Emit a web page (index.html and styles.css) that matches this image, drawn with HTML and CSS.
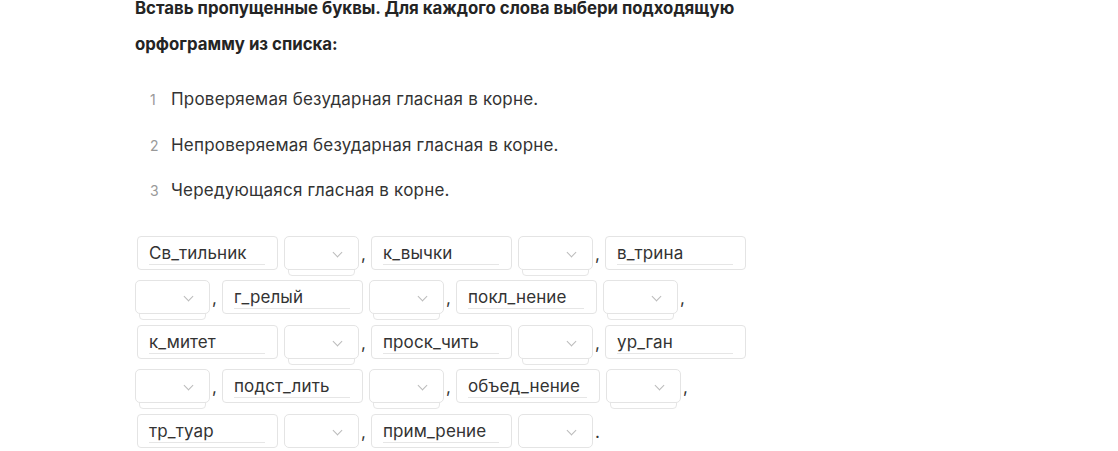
FILE: index.html
```html
<!DOCTYPE html>
<html lang="ru">
<head>
    <meta charset="UTF-8">
    <title>Орфограммы в корне</title>
    <link rel="stylesheet" href="styles.css">
</head>
<body>
    <main class="task">
        <h2 class="task-title">Вставь пропущенные буквы. Для каждого слова выбери подходящую орфограмму из списка:</h2>

        <ol class="rules">
            <li><span class="num">1</span>Проверяемая безударная гласная в корне.</li>
            <li><span class="num">2</span>Непроверяемая безударная гласная в корне.</li>
            <li><span class="num">3</span>Чередующаяся гласная в корне.</li>
        </ol>

        <div class="answers">
            <span class="word"><span class="field">Св_тильник</span></span>
            <span class="pick"><span class="select"></span><span class="punct">,</span></span>
            <span class="word"><span class="field">к_вычки</span></span>
            <span class="pick"><span class="select"></span><span class="punct">,</span></span>
            <span class="word"><span class="field">в_трина</span></span>
            <span class="pick"><span class="select"></span><span class="punct">,</span></span>

            <span class="word"><span class="field">г_релый</span></span>
            <span class="pick"><span class="select"></span><span class="punct">,</span></span>
            <span class="word"><span class="field">покл_нение</span></span>
            <span class="pick"><span class="select"></span><span class="punct">,</span></span>

            <span class="word"><span class="field">к_митет</span></span>
            <span class="pick"><span class="select"></span><span class="punct">,</span></span>
            <span class="word"><span class="field">проск_чить</span></span>
            <span class="pick"><span class="select"></span><span class="punct">,</span></span>
            <span class="word"><span class="field">ур_ган</span></span>
            <span class="pick"><span class="select"></span><span class="punct">,</span></span>

            <span class="word"><span class="field">подст_лить</span></span>
            <span class="pick"><span class="select"></span><span class="punct">,</span></span>
            <span class="word word-wide"><span class="field">объед_нение</span></span>
            <span class="pick"><span class="select"></span><span class="punct">,</span></span>

            <span class="word"><span class="field">тр_туар</span></span>
            <span class="pick"><span class="select"></span><span class="punct">,</span></span>
            <span class="word"><span class="field">прим_рение</span></span>
            <span class="pick"><span class="select"></span><span class="punct">.</span></span>
        </div>
    </main>
</body>
</html>
```

FILE: styles.css
```css
html {
    background-color: #fff;
}

body {
    margin: 0;
    padding: 0;
    font-family: Inter, "Noto Sans", sans-serif;
    color: #333;
}

.task {
    padding-left: 135px;
    width: 620px;
}

.task-title {
    margin: -10px 0 0;
    font-size: 16.8px;
    font-weight: 700;
    line-height: 36px;
    color: #242424;
    width: 615px;
}

.rules {
    list-style: none;
    margin: 15px 0 0;
    padding: 0 0 0 15px;
}

.rules li {
    font-size: 17px;
    letter-spacing: 0.2px;
    line-height: 24px;
    padding: 10px 0 10.5px;
    color: #333;
}

.rules .num {
    display: inline-block;
    width: 21px;
    font-size: 14px;
    letter-spacing: 0;
    color: #999;
}

.answers {
    display: flex;
    flex-wrap: wrap;
    align-items: flex-start;
    row-gap: 10.5px;
    margin-top: 22px;
}

.word {
    box-sizing: border-box;
    width: 141px;
    height: 34px;
    margin: 0 6px 0 2px;
    padding: 0 12px 0 11px;
    border: 1px solid #e4e4e4;
    border-radius: 4px;
    background: #fff;
    display: flex;
    align-items: center;
}

.word-wide {
    width: 144px;
}

.field {
    display: block;
    width: 100%;
    font-size: 17px;
    letter-spacing: 0.1px;
    line-height: 21px;
    padding-top: 2px;
    border-bottom: 1px solid #e6e6e6;
    color: #333;
    white-space: nowrap;
}

.pick {
    display: flex;
    align-items: flex-start;
    height: 34px;
    isolation: isolate;
}

.select {
    position: relative;
    box-sizing: border-box;
    width: 75px;
    height: 34px;
    border: 1px solid #e4e4e4;
    border-radius: 5px;
    background: #fff;
}

/* stacked card under the dropdown */
.select::before {
    content: "";
    position: absolute;
    left: 3px;
    right: 3px;
    top: 6px;
    bottom: -7px;
    border: 1px solid #e6e6e6;
    border-radius: 4px;
    background: #fff;
    z-index: -1;
}

/* chevron */
.select::after {
    content: "";
    position: absolute;
    right: 17px;
    top: 12px;
    width: 6px;
    height: 6px;
    border-right: 1.3px solid #bbb;
    border-bottom: 1.3px solid #bbb;
    transform: rotate(45deg);
}

.punct {
    width: 10px;
    padding: 2px 0 0 2px;
    box-sizing: border-box;
    font-size: 17px;
    line-height: 32px;
    color: #333;
}
```
